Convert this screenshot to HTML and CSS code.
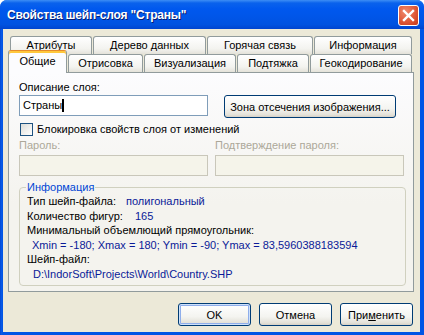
FILE: index.html
```html
<!DOCTYPE html>
<html>
<head>
    <title>Свойства шейп-слоя</title>
    <link rel="stylesheet" href="styles.css">
</head>
<body>
    <div class="window">
        <div class="titlebar">
            <span class="title">Свойства шейп-слоя "Страны"</span>
            <span class="close">
                <svg width="13" height="13" viewBox="0 0 13 13">
                    <path d="M2 2 L11 11 M11 2 L2 11" stroke="#fff" stroke-width="2.4" stroke-linecap="square"/>
                </svg>
            </span>
        </div>

        <div class="client">
            <div class="tabs">
                <div class="tabrow back">
                    <div class="tab w-attr">Атрибуты</div>
                    <div class="tab w-tree">Дерево данных</div>
                    <div class="tab w-hot">Горячая связь</div>
                    <div class="tab w-info">Информация</div>
                </div>
                <div class="tabrow front">
                    <div class="tab active w-main">Общие</div>
                    <div class="tab w-draw">Отрисовка</div>
                    <div class="tab w-vis">Визуализация</div>
                    <div class="tab w-snap">Подтяжка</div>
                    <div class="tab w-geo">Геокодирование</div>
                </div>
            </div>

            <div class="panel">
                <div class="label">Описание слоя:</div>
                <div class="desc-row">
                    <div class="edit">Страны<span class="caret"></span></div>
                    <div class="btn clip-btn">Зона отсечения изображения...</div>
                </div>

                <div class="check-row">
                    <span class="checkbox"></span>
                    <span>Блокировка свойств слоя от изменений</span>
                </div>

                <div class="pass-grid">
                    <div class="label disabled">Пароль:</div>
                    <div class="label disabled">Подтверждение пароля:</div>
                    <div class="edit off"></div>
                    <div class="edit off"></div>
                </div>

                <fieldset class="group">
                    <legend>Информация</legend>
                    <div class="info-line"><span class="key k-type">Тип шейп-файла:</span><span class="val">полигональный</span></div>
                    <div class="info-line"><span class="key k-count">Количество фигур:</span><span class="val">165</span></div>
                    <div class="info-line">Минимальный объемлющий прямоугольник:</div>
                    <div class="info-line val indent">Xmin = -180; Xmax = 180; Ymin = -90; Ymax = 83,5960388183594</div>
                    <div class="info-line">Шейп-файл:</div>
                    <div class="info-line val indent2">D:\IndorSoft\Projects\World\Country.SHP</div>
                </fieldset>
            </div>

            <div class="buttons">
                <div class="btn default">OK</div>
                <div class="btn">Отмена</div>
                <div class="btn">При<u>м</u>енить</div>
            </div>
        </div>
    </div>
</body>
</html>
```

FILE: styles.css
```css
body {
    margin: 0;
    background: #fff;
    font-family: "Liberation Sans", Arial, sans-serif;
    font-size: 11px;
    color: #000;
}
.window {
    width: 424px;
    height: 335px;
    display: flex;
    flex-direction: column;
    background: linear-gradient(to right, #0041CC 0, #0A5AE6 1px, #0055E5 3px);
    border-radius: 7px 7px 0 0;
    overflow: hidden;
}
.titlebar {
    height: 29px;
    display: flex;
    align-items: center;
    justify-content: space-between;
    padding: 0 5px 0 7px;
    background: linear-gradient(to bottom, #3D8EF5 0, #0A62EC 3px, #0058EE 9px, #0056E9 55%, #0052E0 85%, #0044CF 100%);
}
.title {
    color: #fff;
    font-weight: bold;
    font-size: 12px;
    letter-spacing: -0.2px;
    text-shadow: 1px 1px 0 #0A1C6E;
    margin-top: 1px;
}
.close {
    width: 19px;
    height: 19px;
    border: 1px solid #fff;
    border-radius: 3px;
    background: radial-gradient(circle at 35% 30%, #F08A6D, #DD5434 60%, #C2381A);
    display: flex;
    align-items: center;
    justify-content: center;
    margin-top: 2px;
}
.client {
    flex: 1;
    margin: 0 4px 3px 3px;
    padding: 7px 0 0 5px;
    background: #ECE9D8;
}
.tabs {
    width: 406px;
}
.tabrow {
    display: flex;
    gap: 1px;
    align-items: flex-end;
}
.tabrow.back {
    padding-left: 2px;
    height: 18px;
}
.tabrow.front {
    height: 18px;
    position: relative;
    z-index: 1;
}
.tab {
    box-sizing: border-box;
    height: 18px;
    border: 1px solid #919B9C;
    border-bottom: none;
    border-radius: 3px 3px 0 0;
    background: linear-gradient(#FFFFFF, #F3F3EF 70%, #E4E2D9);
    text-align: center;
    line-height: 17px;
    white-space: nowrap;
}
.tab.active {
    height: 23px;
    margin-bottom: -1px;
    border-top: 1px solid #E68B2C;
    box-shadow: inset 0 2px 0 #FFC83C;
    background: #FCFCFE;
    line-height: 21px;
}
.w-attr { width: 82px; }
.w-tree { width: 113px; }
.w-hot { width: 106px; }
.w-info { width: 98px; }
.w-main { width: 59px; }
.w-draw { width: 75px; }
.w-vis { width: 92px; }
.w-snap { width: 72px; }
.w-geo { width: 102px; }
.panel {
    box-sizing: border-box;
    width: 406px;
    height: 220px;
    border: 1px solid #919B9C;
    background: linear-gradient(#FCFCFE, #F4F3EE 60%);
    padding: 8px 0 0 10px;
}
.label {
    line-height: 13px;
}
.label.disabled {
    color: #ACA899;
}
.desc-row {
    display: flex;
    align-items: flex-start;
    margin-top: 1px;
}
.edit {
    box-sizing: border-box;
    width: 189px;
    height: 21px;
    border: 1px solid #7F9DB9;
    background: #fff;
    padding: 3px 0 0 3px;
    line-height: 13px;
}
.edit.off {
    border-color: #C9C7BA;
    background: #F5F4EA;
}
.caret {
    display: inline-block;
    width: 1px;
    height: 13px;
    background: #000;
    vertical-align: top;
    border-right: 1px solid #000;
}
.btn {
    box-sizing: border-box;
    height: 23px;
    border: 1px solid #003C74;
    border-radius: 3px;
    background: linear-gradient(#FFFFFF, #F4F4F0 60%, #E3E1D8 90%, #D6D0C5);
    display: flex;
    align-items: center;
    justify-content: center;
    white-space: nowrap;
}
.clip-btn {
    width: 172px;
    margin-left: 16px;
}
.check-row {
    display: flex;
    align-items: center;
    margin-top: 4px;
    padding-left: 1px;
    height: 14px;
}
.checkbox {
    box-sizing: border-box;
    width: 13px;
    height: 13px;
    border: 1px solid #1C5180;
    background: linear-gradient(135deg, #DCDCD7, #FFFFFF);
    margin-right: 4px;
}
.pass-grid {
    display: grid;
    grid-template-columns: 189px 189px;
    column-gap: 7px;
    row-gap: 3px;
    margin-top: 3px;
}
.group {
    box-sizing: border-box;
    width: 387px;
    height: 105px;
    margin: 5px 0 0 0;
    padding: 0 0 0 7px;
    border: 1px solid #D0D0BF;
    border-radius: 4px;
}
.group legend {
    color: #0046D5;
    padding: 0 1px;
    margin-left: -1px;
    line-height: 13px;
}
.info-line {
    line-height: 14.5px;
    white-space: nowrap;
}
.key {
    display: inline-block;
}
.k-type { width: 99px; }
.k-count { width: 108px; }
.val {
    color: #0A1A98;
}
.indent { padding-left: 5px; }
.indent2 { padding-left: 6px; }
.buttons {
    display: flex;
    justify-content: flex-end;
    gap: 8px;
    margin-top: 11px;
    padding-right: 7px;
}
.buttons .btn {
    width: 73px;
}
.btn.default {
    box-shadow: inset 0 0 0 1px #CEE1FA, inset 0 0 0 2px #8FAEEB;
}
```
